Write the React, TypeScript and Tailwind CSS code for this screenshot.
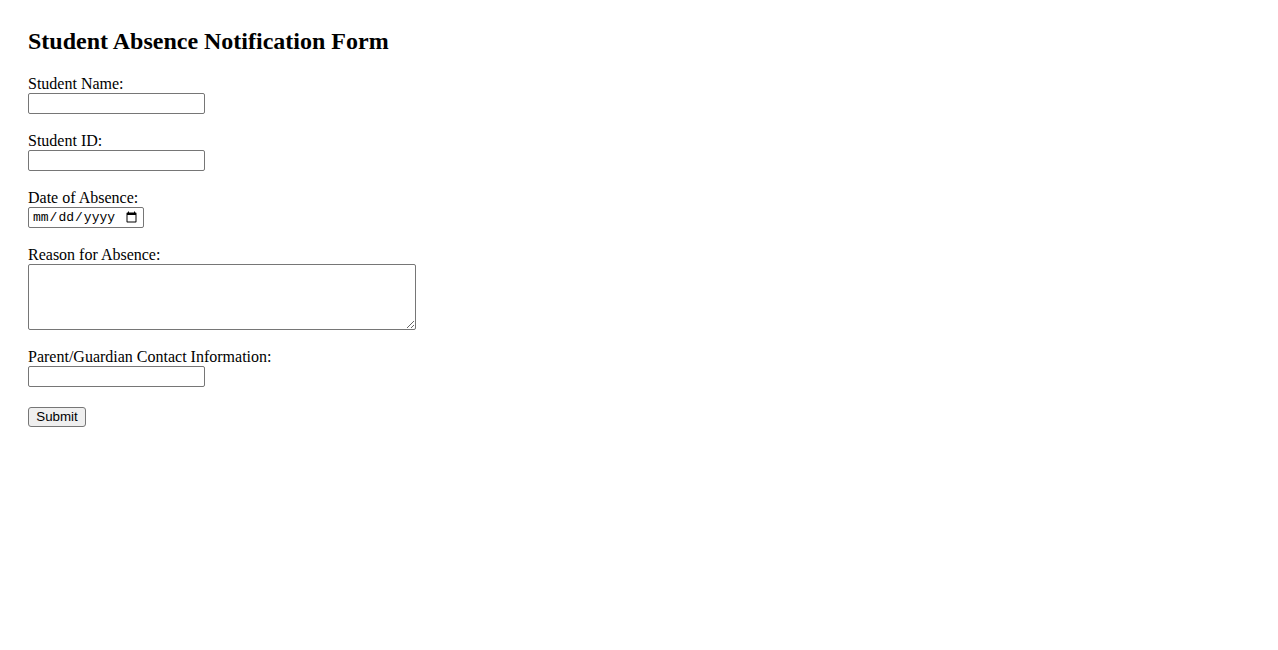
import React from 'react';

const serif = { fontFamily: '"Liberation Serif", "Times New Roman", serif' };

const Field: React.FC<{ label: string; children: React.ReactNode; gap?: string }> = ({ label, children, gap = 'mb-[17px]' }) => (
  <div className={`flex flex-col items-start ${gap}`}>
    <label className="text-[16px] leading-[19px] text-black">{label}</label>
    {children}
  </div>
);

const inputCls =
  'w-[177px] h-[21px] px-[2px] border border-[#767676] rounded-[2px] bg-white text-[13px] text-black outline-none';

export default function App() {
  return (
    <div className="min-h-screen bg-white px-[28px] pt-[27px] text-black" style={serif}>
      <h2 className="text-[24px] leading-[28px] font-bold mb-[19px]">Student Absence Notification Form</h2>
      <form className="flex flex-col items-start" onSubmit={(e) => e.preventDefault()}>
        <Field label="Student Name:">
          <input type="text" className={inputCls} />
        </Field>
        <Field label="Student ID:">
          <input type="text" className={inputCls} />
        </Field>
        <Field label="Date of Absence:">
          <input
            type="date"
            className="w-[116px] h-[21px] px-[3px] border border-[#767676] rounded-[2px] bg-white text-[13px] text-black outline-none"
            style={{ fontFamily: '"Liberation Mono", "Courier New", monospace' }}
          />
        </Field>
        <Field label="Reason for Absence:" gap="mb-[17px]">
          <textarea className="w-[388px] h-[66px] px-[2px] border border-[#767676] rounded-[2px] bg-white text-[13px] outline-none" />
        </Field>
        <Field label="Parent/Guardian Contact Information:" gap="mb-[20px]">
          <input type="text" className={inputCls} />
        </Field>
        <button
          type="submit"
          className="w-[58px] h-[20px] border border-[#767676] rounded-[3px] bg-[#efefef] text-[13.33px] leading-[18px] text-black"
          style={{ fontFamily: '"Liberation Sans", Arial, sans-serif' }}
        >
          Submit
        </button>
      </form>
    </div>
  );
}
